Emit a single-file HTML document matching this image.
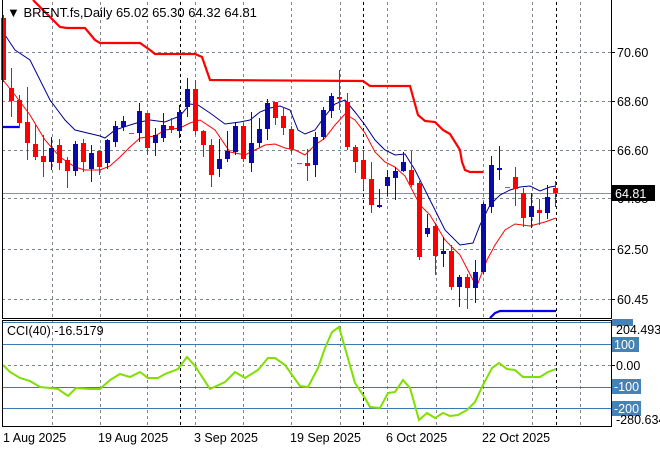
<!DOCTYPE html>
<html><head><meta charset="utf-8"><style>
html,body{margin:0;padding:0;background:#fff;width:660px;height:450px;overflow:hidden}
svg{display:block;font-family:"Liberation Sans",sans-serif;font-size:12.5px}
</style></head><body>
<svg id="s" width="660" height="450" viewBox="0 0 660 450" xmlns="http://www.w3.org/2000/svg">
<rect width="660" height="450" fill="#fff"/>
<g stroke="#7d8594" stroke-width="1" stroke-dasharray="3,3" shape-rendering="crispEdges" fill="none">
<path d="M2 52.5H611M2 101.5H611M2 150.5H611M2 198.5H611M2 249.5H611M2 299.5H611"/>
<path d="M52.5 2V426M100.5 2V426M147.5 2V426M195.5 2V426M243.5 2V426M291.5 2V426M340.5 2V426M387.5 2V426M436.5 2V426M483.5 2V426M532.5 2V426M580.5 2V426"/>
<path d="M2 365.5H611"/>
</g>
<g stroke="#000" stroke-dasharray="3,3" shape-rendering="crispEdges">
<path d="M180.5 2V426M363.5 2V426M556.5 2V426"/>
</g>
<path d="M2 193.5H611" stroke="#8a909a" shape-rendering="crispEdges"/>
<g stroke="#3c78b4" shape-rendering="crispEdges">
<path d="M2 322.5H611M2 344.5H611M2 387.5H611M2 408.5H611"/>
</g>
<polyline fill="none" stroke="#ff0000" stroke-width="2.2" points="33,0 60,27 67,28 85,28 95,40 100,43 140,43 150,50 155,54 195,54 202,57 210,80 363,81 370,86 410,86 418,115 425,121 435,122 443,130 450,134 460,150 462,162 465,170 470,172 483,172"/>
<polyline fill="none" stroke="#0000ff" stroke-width="2.2" points="2,127 20,127"/>
<polyline fill="none" stroke="#0000ff" stroke-width="2.2" points="490,318 495,313 500,311 556,311"/>
<polyline fill="none" stroke="#00008b" stroke-width="1" points="3,32 15,50 30,60 50,100 65,120 75,130 100,136 105,138 115,130 130,125 140,122 150,120 165,122 180,116 190,104 198,105 210,113 225,124 240,122 250,120 260,112 270,108 280,106 290,110 298,130 305,134 315,130 325,116 335,104 345,100 355,112 365,125 375,140 385,150 395,155 405,154 415,170 430,200 445,230 460,245 473,243 480,225 490,205 500,195 510,190 520,187 530,186 540,191 550,187 556,186"/>
<polyline fill="none" stroke="#ff0000" stroke-width="1" points="3,80 15,95 30,115 45,140 60,157 75,167 85,170 100,170 110,166 120,157 130,147 140,138 155,136 165,130 180,128 190,123 200,120 215,130 230,152 245,155 255,150 265,145 275,144 285,148 295,150 305,155 315,145 325,138 335,125 345,114 355,120 365,133 375,152 385,162 395,167 405,176 420,205 430,215 445,240 460,255 473,280 478,283 487,260 495,245 505,230 515,224 530,226 545,222 556,218"/>
<g id="c"></g>
<polyline fill="none" stroke="#7fe000" stroke-width="2" points="3,365 10,372 20,378 30,381 40,387 50,388 58,389 68,396 76,388 90,389 100,389 110,380 120,374 130,377 140,372 148,378 158,378 165,374 178,369 187,357 195,366 210,389 225,382 235,372 245,378 258,370 268,358 275,358 285,365 300,386 308,387 318,368 325,348 332,332 339,327 345,348 355,383 365,398 370,407 380,408 388,393 395,392 403,380 410,388 419,420 427,413 435,418 443,413 450,416 458,415 467,410 475,402 483,385 492,368 499,363 507,369 515,370 523,377 540,377 548,372 556,369"/>
<g stroke="#000" fill="none" shape-rendering="crispEdges">
<path d="M2.5 0V318.5H611.5V0"/>
<path d="M2.5 320.5H611.5V426.5H2.5Z"/>
<path d="M611 52.5h4M611 101.5h4M611 150.5h4M611 198.5h4M611 249.5h4M611 299.5h4M611 365.5h4"/>
</g>
<text x="7" y="17" fill="#000" font-size="13">&#9660; BRENT.fs,Daily  65.02 65.30 64.32 64.81</text>
<g fill="#000">
<text x="617" y="57">70.60</text>
<text x="617" y="106">68.60</text>
<text x="617" y="155">66.60</text>
<text x="617" y="203">64.55</text>
<text x="617" y="254">62.50</text>
<text x="617" y="304">60.45</text>
</g>
<rect x="612" y="185" width="43" height="16" fill="#000"/>
<text x="615" y="198" fill="#fff">64.81</text>
<rect x="612" y="319" width="21" height="7" fill="#4682b4"/>
<rect x="612" y="337" width="27" height="15" fill="#4682b4"/>
<text x="614" y="349" fill="#fff">100</text>
<rect x="612" y="379" width="29" height="15" fill="#4682b4"/>
<text x="614" y="391" fill="#fff">-100</text>
<rect x="612" y="401" width="29" height="15" fill="#4682b4"/>
<text x="614" y="413" fill="#fff">-200</text>
<text x="616" y="334" fill="#000">204.493</text>
<text x="616" y="370" fill="#000">0.00</text>
<text x="616" y="424" fill="#000">-280.634</text>
<text x="7" y="335" fill="#000">CCI(40) -16.5179</text>
<g fill="#000">
<text x="3" y="442">1 Aug 2025</text>
<text x="98" y="442">19 Aug 2025</text>
<text x="194" y="442">3 Sep 2025</text>
<text x="290" y="442">19 Sep 2025</text>
<text x="386" y="442">6 Oct 2025</text>
<text x="482" y="442">22 Oct 2025</text>
</g>
</svg>
<script>
var d=[
[0,'r',18,80,15,82],[1,'r',88,101,68,117],[2,'r',100,123,95,128],[3,'r',122,143,87,160],[4,'r',144,157,125,160],
[5,'r',156,162,135,177],[6,'b',148,162,137,170],[7,'r',145,163,139,170],[8,'r',160,171,157,188],[9,'b',144,171,141,176],
[10,'r',143,162,139,172],[11,'b',153,169,145,182],[12,'r',151,167,150,175],[13,'b',140,163,139,169],[14,'b',126,142,121,147],
[15,'b',121,127,116,131],[16,'g',133],[17,'b',111,133,103,142],[18,'r',113,148,113,155],[19,'b',135,143,128,156],
[20,'b',125,138,113,142],[21,'r',126,130,118,133],[22,'b',112,131,105,138],[23,'b',89,107,78,117],[24,'r',89,131,80,135],
[25,'r',131,145,130,157],[26,'r',145,175,139,187],[27,'b',159,169,139,177],[28,'b',151,159,131,162],[29,'b',126,152,122,155],
[30,'r',126,159,123,162],[31,'b',143,163,112,172],[32,'b',129,143,118,147],[33,'b',103,129,99,140],[34,'r',102,118,102,125],
[35,'r',116,128,107,135],[36,'r',129,149,126,154],[37,'g',163],[38,'r',163,166,149,181],[39,'b',137,165,132,177],
[40,'b',110,137,107,140],[41,'b',96,111,93,118],[42,'r',97,99,70,110],[43,'r',102,147,93,150],[44,'r',147,162,145,173],
[45,'r',160,179,150,190],[46,'r',179,205,162,213],[47,'b',205,207,189,208],[48,'b',177,186,170,196],[49,'b',171,178,167,200],
[50,'b',162,171,152,172],[51,'r',170,185,151,187],[52,'r',183,257,181,260],[53,'b',228,234,214,237],[54,'r',226,256,223,275],
[55,'b',251,254,237,267],[56,'r',251,287,245,290],[57,'b',277,287,275,307],[58,'r',277,288,274,309],[59,'b',272,288,260,303],
[60,'b',204,272,202,274],[61,'b',165,207,156,213],[62,'b',168,170,146,180],[63,'g',187],[64,'r',177,189,167,206],
[65,'r',193,218,188,227],[66,'b',206,217,193,228],[67,'r',210,213,199,225],[68,'b',197,213,185,219],[69,'r',188,193,181,207]];
var h='';
d.forEach(function(c){var x=3+8*c[0];
if(c[1]=='g'){h+='<rect x="'+(x-2)+'" y="'+c[2]+'" width="5" height="1" fill="#00c000"/>';return;}
var wc=c[1]=='r'?'#ff0000':'#0000ff',bc=c[1]=='r'?'#ff0000':'#0a0aa8';
h+='<rect x="'+x+'" y="'+c[4]+'" width="1" height="'+(c[5]-c[4])+'" fill="'+wc+'"/>';
h+='<rect x="'+(x-2)+'" y="'+c[2]+'" width="5" height="'+Math.max(2,c[3]-c[2])+'" fill="'+bc+'"/>';});
document.getElementById('c').innerHTML=h;
</script>
</body></html>
